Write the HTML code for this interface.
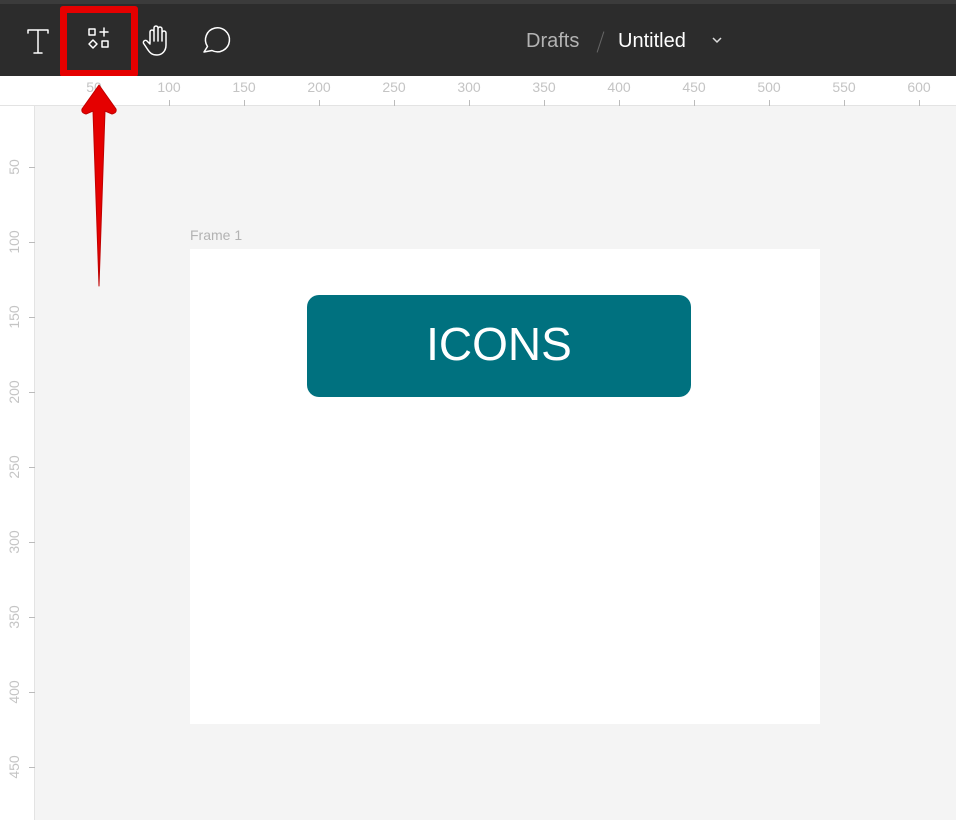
<!DOCTYPE html>
<html><head><meta charset="utf-8"><style>
*{margin:0;padding:0;box-sizing:border-box}
body{width:956px;height:820px;overflow:hidden;background:#f4f4f4;font-family:"Liberation Sans",sans-serif;position:relative}
.top{position:absolute;left:0;top:0;width:956px;height:4px;background:#3b3b3b}
.bar{position:absolute;left:0;top:4px;width:956px;height:72px;background:#2c2c2c}
.hr{position:absolute;left:0;top:76px;width:956px;height:30px;background:#fff;border-bottom:1px solid #e3e3e3}
.vr{position:absolute;left:0;top:106px;width:35px;height:714px;background:#fff;border-right:1px solid #e3e3e3}
.hl{position:absolute;top:79px;font-size:14px;color:#c4c4c4;transform:translateX(-50%)}
.ht{position:absolute;top:100px;width:1px;height:6px;background:#bbb}
.vl{position:absolute;left:14px;font-size:14px;color:#c4c4c4;transform:translate(-50%,-50%) rotate(-90deg)}
.vt{position:absolute;left:29px;width:6px;height:1px;background:#bbb}
</style></head><body>
<div class="top"></div>
<div class="bar"></div>
<svg style="position:absolute;left:0;top:0" width="260" height="80">
 <g fill="none" stroke="#fff" stroke-width="1.5" stroke-linejoin="round" stroke-linecap="round">
  <path d="M28 30H48M38 30V53M34 53H42M28 30v3M48 30v3"/>
  <rect x="89" y="29" width="6" height="6"/><path d="M104 28v8M100 32h8"/>
  <path d="M93 40l4 4-4 4-4-4z"/><rect x="102" y="41" width="6" height="6"/>
  <path d="M150 43V32a2 2 0 0 1 4 0V41M154 41V28a2 2 0 0 1 4 0V41M158 41V29a2 2 0 0 1 4 0V41M162 41V33a2 2 0 0 1 4 0V45c0 6-4 10-9 10-5 0-7-2-9-5l-4-6a2 2 0 0 1 3-3l3 3"/>
  <path d="M204 52l3.5-5.5a12 12 0 1 1 4.5 4z"/>
 </g>
</svg>
<div style="position:absolute;left:60px;top:6px;width:78px;height:71px;border:7px solid #e50000;border-radius:3px"></div>
<div style="position:absolute;left:526px;top:30px;font-size:20px;color:#b3b3b3">Drafts</div>
<div style="position:absolute;left:600px;top:31px;width:1px;height:22px;background:#666;transform:rotate(18deg)"></div>
<div style="position:absolute;left:618px;top:30px;font-size:20px;color:#fff">Untitled</div>
<svg style="position:absolute;left:711px;top:36px" width="12" height="8"><path d="M2 2l4 4 4-4" stroke="#ddd" stroke-width="1.5" fill="none"/></svg>
<div class="hr"></div>
<div class="vr"></div>
<div class="hl" style="left:94px">50</div><div class="ht" style="left:94px"></div>
<div class="hl" style="left:169px">100</div><div class="ht" style="left:169px"></div>
<div class="hl" style="left:244px">150</div><div class="ht" style="left:244px"></div>
<div class="hl" style="left:319px">200</div><div class="ht" style="left:319px"></div>
<div class="hl" style="left:394px">250</div><div class="ht" style="left:394px"></div>
<div class="hl" style="left:469px">300</div><div class="ht" style="left:469px"></div>
<div class="hl" style="left:544px">350</div><div class="ht" style="left:544px"></div>
<div class="hl" style="left:619px">400</div><div class="ht" style="left:619px"></div>
<div class="hl" style="left:694px">450</div><div class="ht" style="left:694px"></div>
<div class="hl" style="left:769px">500</div><div class="ht" style="left:769px"></div>
<div class="hl" style="left:844px">550</div><div class="ht" style="left:844px"></div>
<div class="hl" style="left:919px">600</div><div class="ht" style="left:919px"></div>
<div class="vl" style="top:167px">50</div><div class="vt" style="top:167px"></div>
<div class="vl" style="top:242px">100</div><div class="vt" style="top:242px"></div>
<div class="vl" style="top:317px">150</div><div class="vt" style="top:317px"></div>
<div class="vl" style="top:392px">200</div><div class="vt" style="top:392px"></div>
<div class="vl" style="top:467px">250</div><div class="vt" style="top:467px"></div>
<div class="vl" style="top:542px">300</div><div class="vt" style="top:542px"></div>
<div class="vl" style="top:617px">350</div><div class="vt" style="top:617px"></div>
<div class="vl" style="top:692px">400</div><div class="vt" style="top:692px"></div>
<div class="vl" style="top:767px">450</div><div class="vt" style="top:767px"></div>
<div style="position:absolute;left:190px;top:227px;font-size:14px;color:#b3b3b3">Frame 1</div>
<div style="position:absolute;left:190px;top:249px;width:630px;height:475px;background:#fff"></div>
<div style="position:absolute;left:307px;top:295px;width:384px;height:102px;background:#00717f;border-radius:12px;color:#fff;font-size:46px;text-align:center;line-height:98px">ICONS</div>
<svg style="position:absolute;left:0;top:0" width="200" height="300">
 <path d="M99 85L116 109Q117 113 112 114L105 111L99 286L93 111L86 114Q81 113 82 109Z" fill="#e50000" stroke="#c00000" stroke-width="1" stroke-linejoin="round"/>
</svg>
</body></html>
